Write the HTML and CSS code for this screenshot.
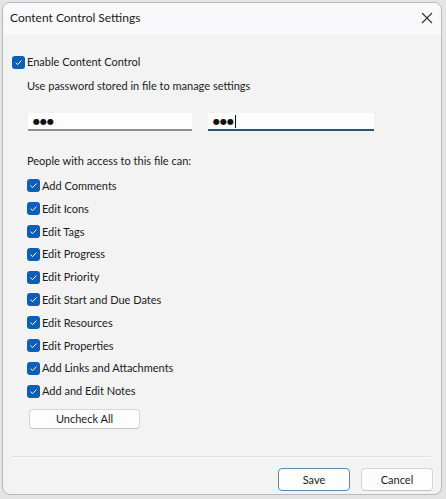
FILE: index.html
```html
<!DOCTYPE html>
<html>
<head>
<meta charset="utf-8">
<link rel="stylesheet" href="styles.css">
</head>
<body>
<div class="window">
  <div class="titlebar">
    <span class="title">Content Control Settings</span>
    <svg class="close" width="12" height="12" viewBox="0 0 12 12"><path d="M1 1L11 11M11 1L1 11" stroke="#333" stroke-width="1.1" fill="none"/></svg>
  </div>
  <div class="content">
    <label class="check enable"><span class="box"><svg width="13" height="13" viewBox="0 0 13 13"><path d="M3.6 6.7L5.6 8.6L9.4 4.6" stroke="#fff" stroke-width="1" fill="none"/></svg></span>Enable Content Control</label>
    <div class="label pw-label">Use password stored in file to manage settings</div>
    <div class="fields">
      <div class="field"><span class="dots">●●●</span></div>
      <div class="field focused"><span class="dots">●●●</span><span class="caret"></span></div>
    </div>
    <div class="label people">People with access to this file can:</div>
    <div class="list">
      <label class="check item"><span class="box"><svg width="13" height="13" viewBox="0 0 13 13"><path d="M3.6 6.7L5.6 8.6L9.4 4.6" stroke="#fff" stroke-width="1" fill="none"/></svg></span>Add Comments</label>
      <label class="check item"><span class="box"><svg width="13" height="13" viewBox="0 0 13 13"><path d="M3.6 6.7L5.6 8.6L9.4 4.6" stroke="#fff" stroke-width="1" fill="none"/></svg></span>Edit Icons</label>
      <label class="check item"><span class="box"><svg width="13" height="13" viewBox="0 0 13 13"><path d="M3.6 6.7L5.6 8.6L9.4 4.6" stroke="#fff" stroke-width="1" fill="none"/></svg></span>Edit Tags</label>
      <label class="check item"><span class="box"><svg width="13" height="13" viewBox="0 0 13 13"><path d="M3.6 6.7L5.6 8.6L9.4 4.6" stroke="#fff" stroke-width="1" fill="none"/></svg></span>Edit Progress</label>
      <label class="check item"><span class="box"><svg width="13" height="13" viewBox="0 0 13 13"><path d="M3.6 6.7L5.6 8.6L9.4 4.6" stroke="#fff" stroke-width="1" fill="none"/></svg></span>Edit Priority</label>
      <label class="check item"><span class="box"><svg width="13" height="13" viewBox="0 0 13 13"><path d="M3.6 6.7L5.6 8.6L9.4 4.6" stroke="#fff" stroke-width="1" fill="none"/></svg></span>Edit Start and Due Dates</label>
      <label class="check item"><span class="box"><svg width="13" height="13" viewBox="0 0 13 13"><path d="M3.6 6.7L5.6 8.6L9.4 4.6" stroke="#fff" stroke-width="1" fill="none"/></svg></span>Edit Resources</label>
      <label class="check item"><span class="box"><svg width="13" height="13" viewBox="0 0 13 13"><path d="M3.6 6.7L5.6 8.6L9.4 4.6" stroke="#fff" stroke-width="1" fill="none"/></svg></span>Edit Properties</label>
      <label class="check item"><span class="box"><svg width="13" height="13" viewBox="0 0 13 13"><path d="M3.6 6.7L5.6 8.6L9.4 4.6" stroke="#fff" stroke-width="1" fill="none"/></svg></span>Add Links and Attachments</label>
      <label class="check item"><span class="box"><svg width="13" height="13" viewBox="0 0 13 13"><path d="M3.6 6.7L5.6 8.6L9.4 4.6" stroke="#fff" stroke-width="1" fill="none"/></svg></span>Add and Edit Notes</label>
    </div>
    <button class="btn uncheck">Uncheck All</button>
    <div class="separator"></div>
    <div class="footer">
      <button class="btn save">Save</button>
      <button class="btn cancel">Cancel</button>
    </div>
  </div>
</div>
</body>
</html>
```

FILE: styles.css
```css
html, body {
  margin: 0;
  padding: 0;
}
body {
  background: #e4e4e4;
  font-family: Lato, "Noto Sans", sans-serif;
  font-size: 11px;
  color: #1b1b1b;
}
.window {
  margin: 2px 0 0 2px;
  width: 440px;
  height: 493px;
  border: 1px solid #b9b9b9;
  border-radius: 8px;
  overflow: hidden;
  background: #f3f3f3;
  box-sizing: border-box;
  display: flex;
  flex-direction: column;
}
.titlebar {
  height: 31px;
  flex: none;
  background: #f9f9fb;
  display: flex;
  align-items: center;
  justify-content: space-between;
  padding: 0 8px 0 7px;
}
.title {
  font-size: 12px;
  color: #1b1b1b;
  margin-top: -3px;
}
.close {
  margin-top: -1px;
}
.content {
  display: flex;
  flex-direction: column;
  padding-left: 9px;
}
.check {
  display: flex;
  align-items: center;
  height: 16px;
  line-height: 16px;
  white-space: nowrap;
}
.box {
  width: 13px;
  height: 13px;
  border-radius: 3px;
  background: #0d5fb6;
  margin-right: 2px;
  flex: none;
  display: block;
}
.box svg {
  display: block;
}
.enable {
  margin-top: 20px;
}
.label {
  height: 16px;
  line-height: 16px;
  margin-left: 15px;
}
.pw-label {
  margin-top: 8px;
}
.fields {
  display: flex;
  gap: 16px;
  margin-top: 19px;
  margin-left: 16px;
}
.field {
  width: 164px;
  height: 18px;
  background: #fdfdfd;
  border-bottom: 2px solid #8e8e8e;
  display: flex;
  align-items: center;
  padding-left: 5px;
  box-sizing: border-box;
}
.field.focused {
  width: 166px;
  border-bottom-color: #1d5a7e;
}
.dots {
  font-size: 8px;
  color: #111;
  font-family: "DejaVu Sans", sans-serif;
}
.caret {
  width: 1px;
  height: 13px;
  background: #111;
  margin-left: 1px;
}
.people {
  margin-top: 22px;
}
.list {
  margin-top: 5.6px;
  margin-left: 15px;
  display: flex;
  flex-direction: column;
}
.item {
  height: 22.8px;
}
.btn {
  font-family: Lato, "Noto Sans", sans-serif;
  font-size: 11px;
  color: #1b1b1b;
  background: #fdfdfd;
  border: 1px solid #d5d5d5;
  border-bottom-color: #c2c2c2;
  border-radius: 4px;
  padding: 0;
}
.uncheck {
  margin-top: 6.4px;
  margin-left: 17px;
  width: 111px;
  height: 20px;
  line-height: 16px;
}
.separator {
  margin-top: 27px;
  margin-right: 10px;
  height: 1px;
  background: #e2e2e2;
  border-bottom: 1px solid #fafafa;
}
.footer {
  display: flex;
  justify-content: flex-end;
  gap: 11px;
  margin-top: 10px;
  padding-right: 8px;
}
.footer .btn {
  width: 72px;
  height: 23px;
}
.save {
  border: 1px solid #5d8aa8;
}
```
